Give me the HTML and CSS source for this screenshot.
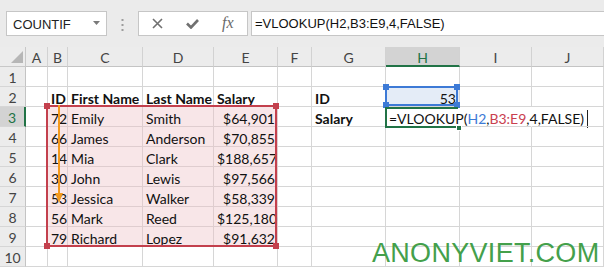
FILE: index.html
```html
<!DOCTYPE html>
<html lang="en">
<head>
  <meta charset="UTF-8">
  <title>VLOOKUP</title>
  <link rel="stylesheet" href="styles.css">
</head>
<body>

<!-- Formula bar -->
<div class="formula-bar">
  <div class="name-box">
    <span>COUNTIF</span>
    <svg class="drop" width="7" height="4" viewBox="0 0 7 4"><path d="M0 0h7L3.5 4z"/></svg>
  </div>
  <svg class="grip" width="3" height="12" viewBox="0 0 3 12">
    <rect x="0.5" y="0" width="2" height="2"/><rect x="0.5" y="5" width="2" height="2"/><rect x="0.5" y="10" width="2" height="2"/>
  </svg>
  <div class="fx-box">
    <svg class="icon-x" width="11" height="11" viewBox="0 0 11 11"><path d="M1 1L10 10M10 1L1 10"/></svg>
    <svg class="icon-ok" width="13" height="10" viewBox="0 0 13 10"><path d="M1 4.5L5 8.5L12 1"/></svg>
    <span class="fx">fx</span>
  </div>
  <div class="formula-input">=VLOOKUP(H2,B3:E9,4,FALSE)</div>
</div>

<!-- Sheet -->
<div class="sheet">
  <div class="corner"><span class="tri"></span></div>
  <div class="hd">A</div><div class="hd">B</div><div class="hd">C</div><div class="hd">D</div><div class="hd">E</div>
  <div class="hd">F</div><div class="hd">G</div><div class="hd on">H</div><div class="hd">I</div><div class="hd">J</div>

  <div class="rh">1</div>
  <div class="c"></div><div class="c"></div><div class="c"></div><div class="c"></div><div class="c"></div>
  <div class="c"></div><div class="c"></div><div class="c"></div><div class="c"></div><div class="c"></div>

  <div class="rh">2</div>
  <div class="c"></div><div class="c b">ID</div><div class="c b">First Name</div><div class="c b">Last Name</div><div class="c b">Salary</div>
  <div class="c"></div><div class="c b">ID</div><div class="c r hl">53</div><div class="c"></div><div class="c"></div>

  <div class="rh on">3</div>
  <div class="c"></div><div class="c pk r id">72</div><div class="c pk">Emily</div><div class="c pk">Smith</div><div class="c pk r">$64,901</div>
  <div class="c"></div><div class="c b">Salary</div>
  <div class="c nv">=VLOOKUP(<span class="ref-h">H2</span>,<span class="ref-b">B3:E9</span>,4,FALSE)<span class="caret"></span></div>
  <div class="c nv"></div><div class="c"></div>

  <div class="rh">4</div>
  <div class="c"></div><div class="c pk r id">66</div><div class="c pk">James</div><div class="c pk">Anderson</div><div class="c pk r">$70,855</div>
  <div class="c"></div><div class="c"></div><div class="c"></div><div class="c"></div><div class="c"></div>

  <div class="rh">5</div>
  <div class="c"></div><div class="c pk r id">14</div><div class="c pk">Mia</div><div class="c pk">Clark</div><div class="c pk r">$188,657</div>
  <div class="c"></div><div class="c"></div><div class="c"></div><div class="c"></div><div class="c"></div>

  <div class="rh">6</div>
  <div class="c"></div><div class="c pk r id">30</div><div class="c pk">John</div><div class="c pk">Lewis</div><div class="c pk r">$97,566</div>
  <div class="c"></div><div class="c"></div><div class="c"></div><div class="c"></div><div class="c"></div>

  <div class="rh">7</div>
  <div class="c"></div><div class="c pk r id">53</div><div class="c pk">Jessica</div><div class="c pk">Walker</div><div class="c pk r">$58,339</div>
  <div class="c"></div><div class="c"></div><div class="c"></div><div class="c"></div><div class="c"></div>

  <div class="rh">8</div>
  <div class="c"></div><div class="c pk r id">56</div><div class="c pk">Mark</div><div class="c pk">Reed</div><div class="c pk r">$125,180</div>
  <div class="c"></div><div class="c"></div><div class="c"></div><div class="c"></div><div class="c"></div>

  <div class="rh">9</div>
  <div class="c"></div><div class="c pk r id">79</div><div class="c pk">Richard</div><div class="c pk">Lopez</div><div class="c pk r">$91,632</div>
  <div class="c"></div><div class="c"></div><div class="c"></div><div class="c"></div><div class="c"></div>

  <div class="rh">10</div>
  <div class="c"></div><div class="c"></div><div class="c"></div><div class="c"></div><div class="c"></div>
  <div class="c"></div><div class="c"></div><div class="c"></div><div class="c"></div><div class="c"></div>

  <!-- highlights drawn over the grid -->
  <div class="range"><i class="hdl tl"></i><i class="hdl tr"></i><i class="hdl bl"></i><i class="hdl br"></i></div>
  <div class="pick"><i class="hdl tl"></i><i class="hdl tr"></i><i class="hdl bl"></i><i class="hdl br"></i></div>
  <div class="edit"></div>
  <div class="fill-handle"></div>
  <svg class="arrow" width="10" height="98" viewBox="0 0 10 98">
    <path d="M5 0V90" stroke="#f4991c" stroke-width="2"/>
    <path d="M1 88H9L5 98z" fill="#f4991c"/>
  </svg>
</div>

<div class="watermark">ANONYVIET.COM</div>

</body>
</html>
```

FILE: styles.css
```css
body {
  margin: 0;
  background: #fff;
  font-family: "Liberation Sans", Arial, sans-serif;
  overflow: hidden;
  position: relative;
  height: 267px;
}

/* formula bar */
.formula-bar {
  height: 47px;
  background: #ebebeb;
  display: flex;
  align-items: flex-start;
  padding-top: 11px;
  box-sizing: border-box;
}
.name-box {
  width: 101px;
  height: 25px;
  margin-left: 6px;
  background: #fff;
  border: 1px solid #c6c6c6;
  box-sizing: border-box;
  display: flex;
  align-items: center;
  justify-content: space-between;
  padding: 1px 6px 0 6px;
  font-size: 13px;
  color: #222;
}
.drop {
  fill: #7a7a7a;
  margin-top: -2px;
}
.grip {
  flex: none;
  fill: #9c9c9c;
  margin: 8px 0 0 14px;
}
.fx-box {
  width: 110px;
  height: 25px;
  margin-left: 14px;
  background: #fff;
  border: 1px solid #c6c6c6;
  box-sizing: border-box;
  display: flex;
  align-items: center;
}
.icon-x {
  margin-left: 13px;
  stroke: #707070;
  stroke-width: 1.6;
  fill: none;
}
.icon-ok {
  margin-left: 23px;
  stroke: #707070;
  stroke-width: 2.6;
  fill: none;
}
.fx {
  margin-left: 23px;
  font-family: "Liberation Serif", serif;
  font-style: italic;
  font-size: 16px;
  color: #6a6a6a;
  margin-top: -2px;
}
.formula-input {
  flex: 1;
  height: 25px;
  margin: 0 -2px 0 3px;
  background: #fff;
  border: 1px solid #c6c6c6;
  box-sizing: border-box;
  padding: 2px 0 0 3px;
  line-height: 20px;
  font-size: 13px;
  color: #111;
}

/* sheet grid */
.sheet {
  position: relative;
  display: grid;
  grid-template-columns: 26px 22px 20px 75px 71px 64px 34px 74px 74px 72px 1fr;
  grid-template-rows: 20px;
  grid-auto-rows: 20px;
  font-family: Lato, "Liberation Sans", sans-serif;
  font-size: 14px;
  color: #111;
}
.sheet > div {
  box-sizing: border-box;
  white-space: nowrap;
}
.corner {
  background: #ececec;
  border-right: 1px solid #c8c8c8;
  border-bottom: 1px solid #c8c8c8;
  display: flex;
  justify-content: flex-end;
  align-items: flex-end;
  padding: 0 2px 3px 0;
}
.tri {
  width: 0;
  height: 0;
  border-left: 12px solid transparent;
  border-bottom: 12px solid #b6b6b6;
}
.hd {
  background: #ececec;
  border-right: 1px solid #d2d2d2;
  border-bottom: 1px solid #c4c4c4;
  text-align: center;
  line-height: 19px;
  padding-top: 1px;
  color: #444;
}
.rh {
  background: #ececec;
  border-right: 1px solid #c4c4c4;
  border-bottom: 1px solid #d6d6d6;
  text-align: center;
  line-height: 19px;
  padding-top: 1px;
  color: #444;
}
.hd.on {
  background: #d3d3d3;
  color: #217346;
  border-bottom: 2px solid #217346;
}
.rh.on {
  background: #d3d3d3;
  color: #217346;
  border-right: 2px solid #217346;
}
.c {
  border-right: 1px solid #d6d6d6;
  border-bottom: 1px solid #d6d6d6;
  padding: 2px 3px 0;
  line-height: 19px;
}
.c.b { font-weight: bold; }
.c.r { text-align: right; padding-right: 2px; }
.c.id { padding-right: 0; }
.c.pk {
  background: #f8e6e8;
  border-color: #dfcdcf;
}
.c.hl {
  background: #e4ecf7;
  padding-right: 3px;
}
.c.nv { border-right-color: transparent; }
.ref-h { color: #3d7ad6; }
.ref-b { color: #c9404f; }
.caret {
  display: inline-block;
  width: 1px;
  height: 18px;
  background: #222;
  vertical-align: -4px;
  margin-left: 3px;
}

/* highlight boxes */
.range, .pick, .edit {
  position: absolute;
  box-sizing: border-box;
}
.range {
  left: 46px;
  top: 58px;
  width: 231px;
  height: 142px;
  border: 2px solid #c3404d;
}
.range .hdl { background: #c3404d; }
.pick {
  left: 385px;
  top: 39px;
  width: 73px;
  height: 20px;
  border: 2px solid #3d7ad6;
}
.pick .hdl { background: #3d7ad6; }
.hdl {
  position: absolute;
  width: 6px;
  height: 6px;
}
.hdl.tl { left: -4px; top: -4px; }
.hdl.tr { right: -4px; top: -4px; }
.hdl.bl { left: -4px; bottom: -4px; }
.hdl.br { right: -4px; bottom: -4px; }
.edit {
  left: 385px;
  top: 60px;
  width: 73px;
  height: 21px;
  border: 2px solid #217346;
  border-right: none;
}
.fill-handle {
  position: absolute;
  left: 456px;
  top: 78px;
  width: 6px;
  height: 6px;
  background: #217346;
  border: 1px solid #fff;
}
.arrow {
  position: absolute;
  left: 54px;
  top: 58px;
}

.watermark {
  position: absolute;
  left: 372px;
  top: 243px;
  font-family: "Liberation Sans", sans-serif;
  font-size: 27px;
  line-height: 20px;
  letter-spacing: 0.3px;
  color: #44a04b;
}
```
